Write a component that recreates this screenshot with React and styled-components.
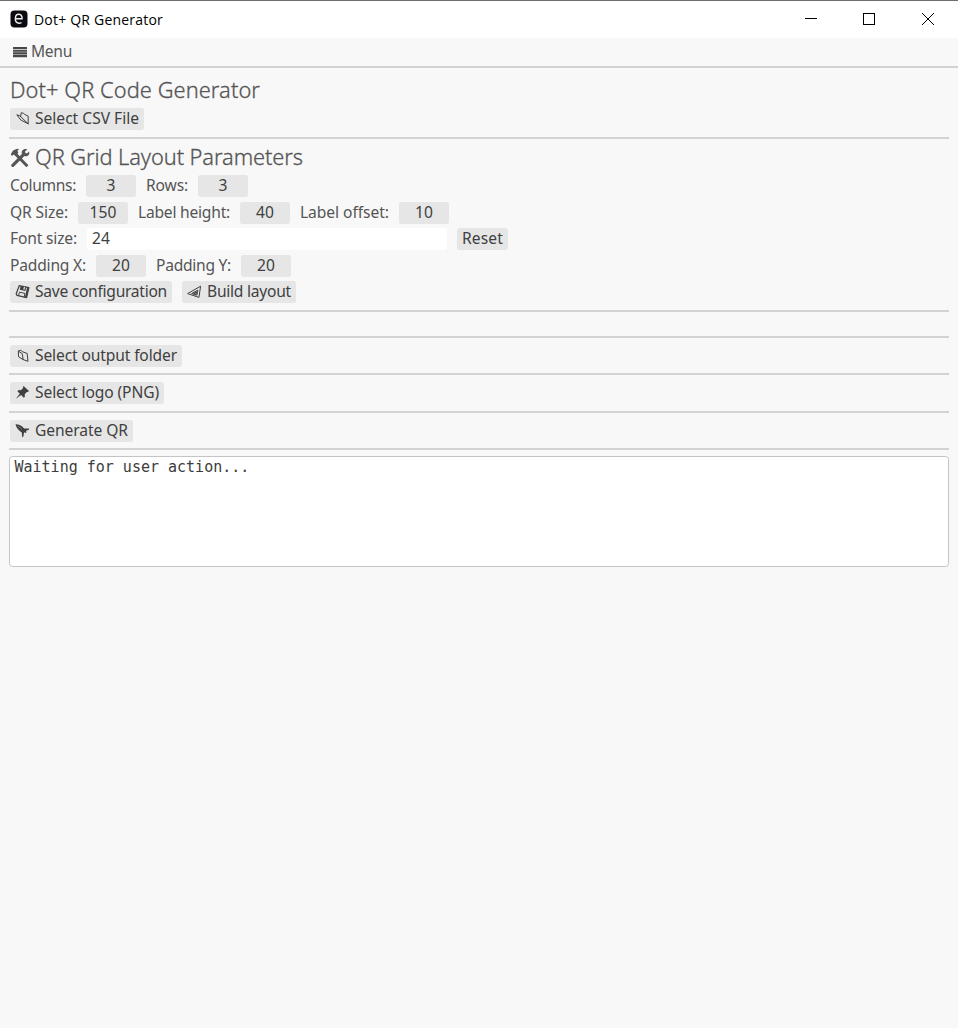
import React, { useLayoutEffect, useRef, useState } from "react";
import styled, { createGlobalStyle } from "styled-components";

const Global = createGlobalStyle`
  *, *::before, *::after { box-sizing: border-box; }
  html, body { margin: 0; padding: 0; background: #f8f8f8; }
  body { font-family: "Noto Sans", "Open Sans", sans-serif; overflow: hidden; }
`;

const Window = styled.div`
  height: 1028px;
  display: flex;
  flex-direction: column;
  background: #f8f8f8;
  color: #555;
`;

const TitleBar = styled.header`
  height: 38px;
  flex: none;
  display: flex;
  align-items: center;
  padding: 0 1px 0 10px;
  background: #fff;
  box-shadow: inset 0 1px #6e6e6e;
  color: #000;
`;

const TitleText = styled.span`
  margin-left: 6px;
  padding-top: 3px;
  flex: 1;
  font-family: "Open Sans", sans-serif;
  font-size: 14px;
  line-height: 20px;
`;

const Controls = styled.div`
  display: flex;
  height: 38px;
`;

const Control = styled.div`
  width: 58.5px;
  display: flex;
  align-items: center;
  justify-content: center;
`;

const MenuBar = styled.nav`
  height: 30px;
  flex: none;
  display: flex;
  align-items: center;
  padding: 0 0 0 13px;
  border-bottom: 2px solid #d2d2d2;
  gap: 4px;
  font-size: 15.6px;
  line-height: 22px;
`;

const Panel = styled.main`
  display: flex;
  flex-direction: column;
  padding: 9px 9px 0;
`;

const Heading = styled.h1`
  margin: 0 0 0 1px;
  height: 31px;
  padding-bottom: 3px;
  display: flex;
  align-items: center;
  gap: 5px;
  font-size: 21.8px;
  line-height: 24px;
  font-weight: 300;
  -webkit-text-stroke: 0.3px currentColor;
`;

const Row = styled.div`
  height: 22px;
  margin: 0 0 ${(p) => p.$after ?? 4.5}px 1px;
  display: flex;
  align-items: center;
  gap: 10px;
  font-size: 15.6px;
  line-height: 20px;
`;

const Rule = styled.hr`
  width: 100%;
  height: 2px;
  flex: none;
  border: 0;
  margin: 0 0 ${(p) => p.$after}px;
  background: #d2d2d2;
`;

const Button = styled.button`
  width: ${(p) => p.$width}px;
  height: 22px;
  flex: none;
  display: flex;
  align-items: center;
  gap: 5px;
  padding: 0 5px;
  border: 0;
  border-radius: 2.5px;
  background: #e6e6e6;
  color: #404040;
  font: inherit;
`;

const DragValue = styled(Button)`
  justify-content: center;
  padding-bottom: 2px;
`;

const Field = styled.input`
  width: 360px;
  height: 22px;
  border: 0;
  border-radius: 2.5px;
  padding: 0 5px 2px;
  background: #fff;
  color: #404040;
  font: inherit;
  letter-spacing: 0.2px;
`;

const Log = styled.textarea`
  width: 940px;
  height: 111px;
  display: block;
  resize: none;
  padding: 1px 4.5px;
  border: 1.5px solid #c4c4c4;
  border-radius: 3.5px;
  outline: none;
  background: #fff;
  color: #3c3c3c;
  font-family: "DejaVu Sans Mono", monospace;
  font-size: 15px;
  line-height: 19px;
`;

const TextBox = styled.span`
  display: block;
  flex: none;
  width: ${(p) => p.$width}px;
  padding-bottom: 2px;
  white-space: nowrap;
  text-align: left;
`;

const Drawing = styled.svg`
  display: block;
  flex: none;
  overflow: visible;
`;

const ButtonDrawing = styled(Drawing)`
  margin-bottom: 1px;
`;

/* Spreads a caption over the given advance width. */
function Caption({ width, children }) {
  const ref = useRef(null);
  const [spacing, setSpacing] = useState(0);
  useLayoutEffect(() => {
    const natural = ref.current.getBoundingClientRect().width;
    setSpacing((width - natural) / String(children).length);
  }, []);
  return (
    <TextBox $width={width}>
      <span ref={ref} style={{ letterSpacing: spacing }}>{children}</span>
    </TextBox>
  );
}

function Icon({ size = 15, children }) {
  return (
    <ButtonDrawing width={size} height={size} viewBox="0 0 15 15" fill="none" stroke="currentColor" strokeWidth="1" strokeLinejoin="round" strokeLinecap="round">
      {children}
    </ButtonDrawing>
  );
}

const OpenFolder = () => (
  <Icon>
    <path d="M13.2 12.8 5.8 9 1.8 3.8l3 1 8.4 8V5.2L9.7 3.4 8.3 2.2 6.2 1.8 5.7 5.2" />
  </Icon>
);
const Folder = () => (
  <Icon>
    <path d="m12.6 13.2-4.4-1.6L3.6 8.8 3.3 3.1l2.5-1 1.3 1.5 4.7 1.7zM3.3 3.1l3.9 2.6 1 5.9" />
  </Icon>
);
const Tools = () => (
  <Drawing width="20" height="20" viewBox="0 0 20 20" fill="none" stroke="currentColor">
    <path d="m5.8 6.2 11.6 12" strokeWidth="3" />
    <path d="M.8 6.2 3.1 2.5 7 .7l2.2.5-1.7 1.4.8 2.5-2.8 2.6-2-1.3-1.5 1.7z" fill="currentColor" stroke="none" />
    <path d="M14 6.1 2.8 17.3" strokeWidth="3.2" strokeLinecap="round" />
    <path d="m17.3 1.2-2.5 2.5.8 1.2 1.3.6 2.2-2.1c1 3.1-1.7 5.8-4.7 4.7l-2.6-2.5C11.1 2.5 14 .2 17.3 1.2z" fill="currentColor" stroke="none" />
  </Drawing>
);
const Floppy = () => (
  <Icon>
    <path d="M4.2 1.7 13.9 3.6 11.6 13.6 2 11.4 1.2 9.8z" fill="#e6e6e6" strokeWidth="1.2" />
    <path d="m5.6 1.9-.8 3.8 5.6 1.2.8-3.8z" fill="currentColor" stroke="none" />
    <path d="m9.4 3.3-.4 1.9" stroke="#e6e6e6" strokeWidth="1.3" />
    <path d="m3.6 11.4.8-3.2 5.6 1.2-.8 3.4" strokeWidth="1" />
    <path d="m12.8 4.3-1.8 8.4" strokeWidth="1.8" />
  </Icon>
);
const SetSquare = () => (
  <Icon>
    <path d="M1 9.4 13.6 2.2 12 13zM5 9.4l5.8-3.3-.8 4.7zM7 9.1l2.5-1.2-.3 1.9z" />
  </Icon>
);
const Pin = () => (
  <Icon>
    <path d="m8.6 1 5.4 5-1.2 1-1-.1-2.2 2.5.4 2.1-1.2 1.2-2.7-2.6-4.9 3.5L1 13.5l3.8-4.8-2.4-2.5 1.3-1.1 2 .2 2.5-2.2-.3-1z" fill="currentColor" stroke="none" />
  </Icon>
);
const Rocket = () => (
  <Icon>
    <path d="M.5 1.3c3-.1 6.2 1 8.6 4.2l5.2-.1-.3 1-3 1.5.5 1.4-1 .8-1.4-.8-.8 4.4-1.1.5-.4-4.7C4 8 1.4 5 .5 1.3z" fill="currentColor" stroke="none" />
    <path d="m3.6 3.6.7.6m1.3 1 .6.5" stroke="#999" strokeWidth=".9" />
  </Icon>
);

const AppMark = () => (
  <Drawing width="18" height="18" viewBox="0 0 18 18">
    <rect x=".5" y=".5" width="17" height="17" rx="4" fill="#090b10" />
    <path d="M5.8 8.8h6.3c.5-5.8-6.3-6-6.7-.8-.5 4.9 3.2 6.2 6.2 4.5" fill="none" stroke="#eee" strokeWidth="1.4" />
  </Drawing>
);

function Action({ icon, label, width }) {
  return (
    <Button $width={width}>
      {icon}
      <Caption width={width - 30}>{label}</Caption>
    </Button>
  );
}

function Setting({ label, labelWidth, value }) {
  return (
    <>
      <Caption width={labelWidth}>{label}</Caption>
      <DragValue $width={50}>{value}</DragValue>
    </>
  );
}

export default function App() {
  return (
    <Window>
      <Global />
      <TitleBar>
        <AppMark />
        <TitleText><Caption width={129}>Dot+ QR Generator</Caption></TitleText>
        <Controls>
          <Control>
            <Drawing width="12" height="12"><path d="M0 5.5h12" stroke="#000" /></Drawing>
          </Control>
          <Control>
            <Drawing width="12" height="12"><rect x=".5" y=".5" width="11" height="11" fill="none" stroke="#000" /></Drawing>
          </Control>
          <Control>
            <Drawing width="12" height="12"><path d="m0 0 12 12M12 0 0 12" stroke="#000" /></Drawing>
          </Control>
        </Controls>
      </TitleBar>
      <MenuBar>
        <Drawing width="14" height="10"><path d="M0 1h14M0 3.7h14M0 6.4h14M0 9.1h14" stroke="#484848" strokeWidth="2.1" /></Drawing>
        <Caption width={41}>Menu</Caption>
      </MenuBar>
      <Panel>
        <Heading><Caption width={250}>Dot+ QR Code Generator</Caption></Heading>
        <Row $after={7}><Action icon={<OpenFolder />} label="Select CSV File" width={134} /></Row>
        <Rule $after={5} />
        <Heading><Tools /><Caption width={268}>QR Grid Layout Parameters</Caption></Heading>
        <Row>
          <Setting label="Columns:" labelWidth={66} value="3" />
          <Setting label="Rows:" labelWidth={42} value="3" />
        </Row>
        <Row>
          <Setting label="QR Size:" labelWidth={58} value="150" />
          <Setting label="Label height:" labelWidth={92} value="40" />
          <Setting label="Label offset:" labelWidth={89} value="10" />
        </Row>
        <Row>
          <Caption width={67}>Font size:</Caption>
          <Field defaultValue="24" />
          <Button $width={51}><Caption width={41}>Reset</Caption></Button>
        </Row>
        <Row>
          <Setting label="Padding X:" labelWidth={76} value="20" />
          <Setting label="Padding Y:" labelWidth={75} value="20" />
        </Row>
        <Row $after={7}>
          <Action icon={<Floppy />} label="Save configuration" width={162} />
          <Action icon={<SetSquare />} label="Build layout" width={114} />
        </Row>
        <Rule $after={24} />
        <Rule $after={7} />
        <Row $after={6}><Action icon={<Folder />} label="Select output folder" width={172} /></Row>
        <Rule $after={7} />
        <Row $after={7}><Action icon={<Pin />} label="Select logo (PNG)" width={154} /></Row>
        <Rule $after={7} />
        <Row $after={6}><Action icon={<Rocket />} label="Generate QR" width={123} /></Row>
        <Rule $after={6} />
        <Log defaultValue="Waiting for user action..." spellCheck={false} />
      </Panel>
    </Window>
  );
}
